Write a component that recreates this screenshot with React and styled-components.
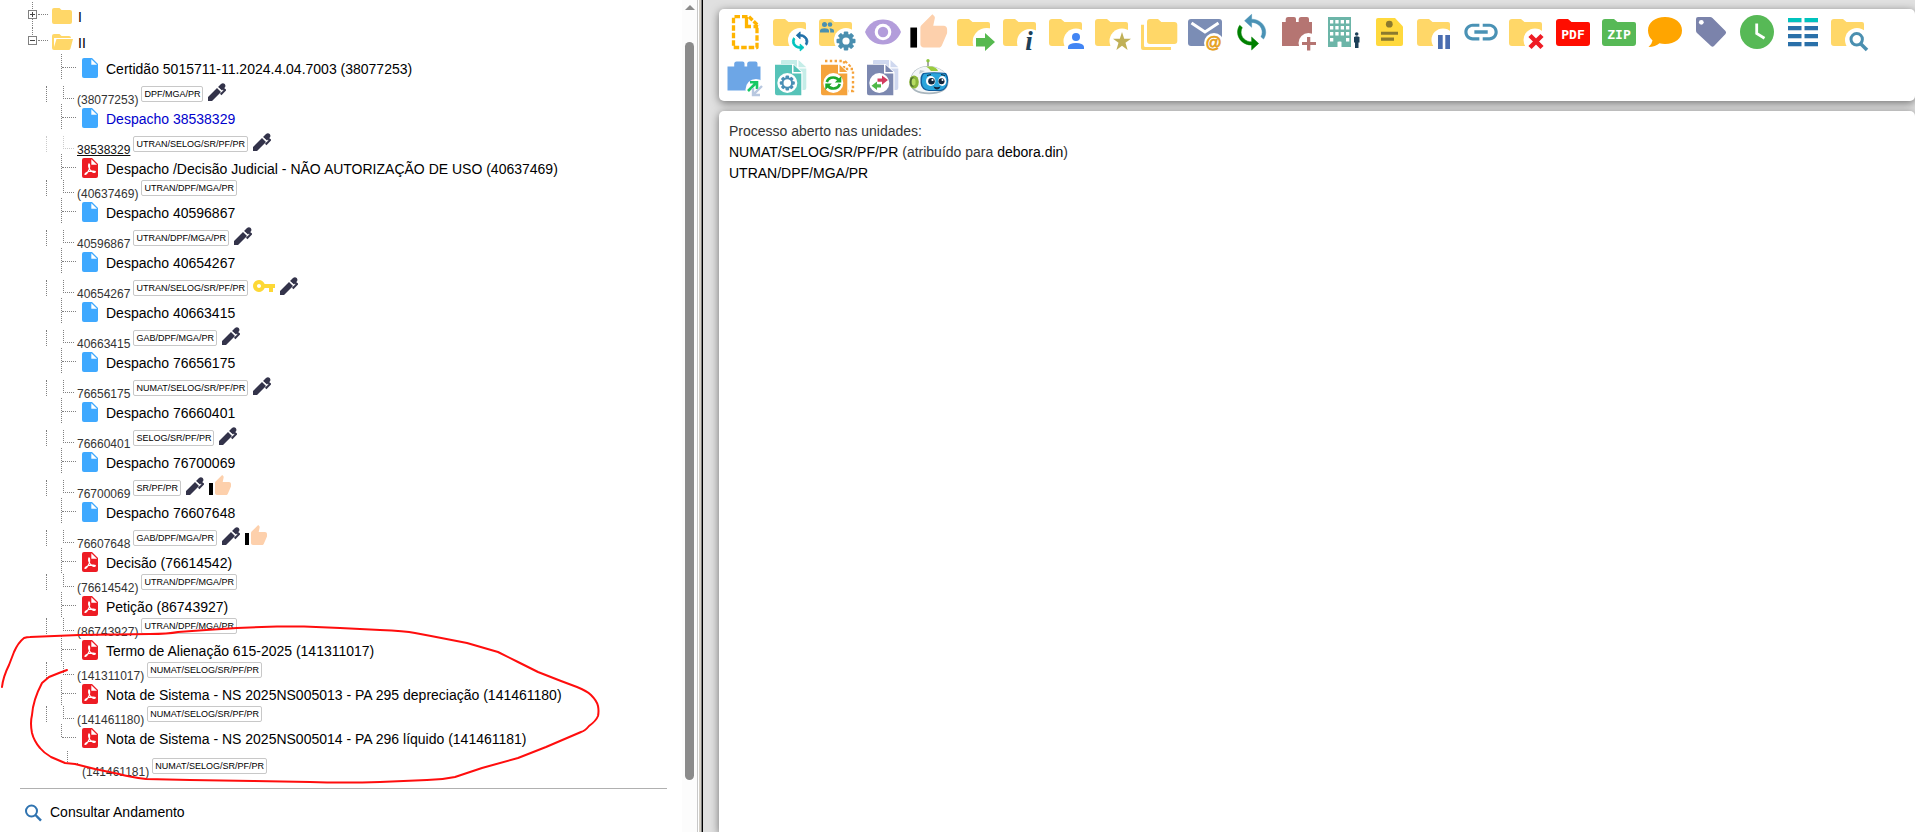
import React from "react";
import styled, { createGlobalStyle, css } from "styled-components";

const GlobalStyle = createGlobalStyle`
  * { box-sizing: border-box; }
  body {
    margin: 0;
    background: #fff;
    color: #333;
    font: 14px/16px "Liberation Sans", Arial, sans-serif;
  }
  ul { list-style: none; margin: 0; padding: 0; }
  a { color: #000; text-decoration: none; }
`;

/* ---------- page frame ---------- */

const Page = styled.div`
  display: grid;
  grid-template-columns: minmax(0, 703fr) minmax(0, 1212fr);
  height: 100vh;
  overflow: hidden;
`;

const TreePane = styled.aside`
  display: flex;
  min-width: 0;
  overflow: hidden;
`;

const TreeContent = styled.div`
  position: relative;
  flex: 1;
  min-width: 0;
  padding-top: 2px;
  white-space: nowrap;
  overflow: hidden;
`;

const ScrollTrack = styled.div`
  display: flex;
  flex-direction: column;
  align-items: center;
  flex: 0 0 15px;
  padding: 5px 0 52px;
  background: #fcfcfc;
`;

const ScrollArrow = styled.span`
  border: 5px solid transparent;
  border-top-width: 0;
  border-bottom-color: #8b8b8b;
`;

const ScrollThumb = styled.span`
  flex: 1;
  width: 9px;
  margin-top: 32px;
  border-radius: 5px;
  background: #8b8b8b;
`;

const Splitter = styled.div`
  flex: 0 0 6px;
  border-left: 1px solid #c8c8c8;
  border-right: 1px solid #000;
  background: linear-gradient(to right, #fff 0 1px, #d4d0c8 1px 3px, #808080 3px);
`;

/* ---------- process tree ---------- */

const dots = "1px dotted #808080";

const FolderRow = styled.div`
  display: flex;
  align-items: flex-start;
  height: 26px;
  padding-left: 28px;
`;

const Toggle = styled.button`
  display: block;
  width: 10px;
  height: 26px;
  padding: 0;
  border: 0;
  background: none;
`;

const FolderBranch = styled.span`
  width: 10px;
  height: 13px;
  border-bottom: ${dots};
`;

const FolderIcon = styled.svg`
  width: 22px;
  height: 16px;
  margin: 6px 4px 0;
`;

const FolderName = styled.span`
  padding-top: 7px;
  color: #000;
`;

const TitleRow = styled.div`
  display: flex;
  align-items: flex-start;
  height: 25px;
  padding-left: 61px;
`;

const Branch = styled.span`
  width: 15px;
  height: ${(p) => (p.$last ? 13 : 25)}px;
  border-left: ${dots};
  &::before {
    content: "";
    display: block;
    height: 13px;
    border-bottom: ${dots};
  }
`;

const DocIcon = styled.svg`
  width: 16px;
  height: 20px;
  margin: 4px 8px 0 6px;
`;

const DocLink = styled.a`
  padding-top: 7px;
  color: ${(p) => (p.$visited ? "#0000cc" : "#000")};
`;

const MetaRow = styled.div`
  display: flex;
  align-items: flex-end;
  height: ${(p) => (p.$tall ? 25 : 19)}px;
  padding: 0 0 2px 46px;
  ${(p) =>
    p.$last &&
    css`
      height: 27px;
      padding-left: 50px;
    `}
`;

const Guide = styled.span`
  width: 17px;
  height: 16px;
  border-left: ${(p) => (p.$hidden ? "0" : dots)};
  opacity: ${(p) => (p.$faint ? 0.4 : 1)};
`;

const Corner = styled.span`
  align-self: flex-end;
  width: 11px;
  height: 13px;
  margin: ${(p) => (p.$last ? "0 4px 10px 0" : "0 3px 3px 0")};
  border-left: ${dots};
  border-bottom: ${dots};
  opacity: ${(p) => (p.$faint ? 0.4 : 1)};
`;

const DocNumber = styled.span`
  margin: 0 3px -5px 0;
  font-size: 12px;
  line-height: 14px;
  color: ${(p) => (p.$selected ? "#111" : "#333")};
  text-decoration: ${(p) => (p.$selected ? "underline" : "none")};
`;

const UnitBadge = styled.a`
  height: 16px;
  padding: 0 2px;
  border: 1px solid #c8c8c8;
  border-radius: 2px;
  background: #fff;
  font-size: 9px;
  line-height: 14px;
`;

const MetaIcon = styled.svg`
  width: ${(p) => p.$w}px;
  height: ${(p) => p.$h}px;
  margin: 0 0 ${(p) => p.$lift || 1}px 5px;
`;

const Footer = styled.footer`
  margin: 12px 15px 0 20px;
  padding: 15px 5px;
  border-top: 1px solid #b0b0b0;
`;

const FooterLink = styled.a`
  display: flex;
  align-items: flex-start;
  gap: 8px;
`;

const Annotation = styled.svg`
  position: absolute;
  top: 0;
  left: 0;
  width: 620px;
  height: 832px;
  pointer-events: none;
`;

/* ---------- right side ---------- */

const MainPane = styled.main`
  display: flex;
  flex-direction: column;
  gap: 10px;
  padding: 9px 0 0 16px;
  background: #e0e0e0;
  overflow: hidden;
`;

const Card = styled.section`
  border-radius: 5px;
  background: #fff;
  box-shadow: 0 2px 9px rgba(0, 0, 0, 0.5);
`;

const Toolbar = styled(Card)`
  display: flex;
  flex-wrap: wrap;
  padding-left: 3px;
`;

const ToolButton = styled.button`
  width: 46px;
  height: 46px;
  padding: 0;
  border: 0;
  background: none;
  cursor: pointer;
  svg { display: block; }
`;

const Details = styled(Card)`
  flex: 1;
  padding: 10px;
  border-radius: 5px 5px 0 0;
  line-height: 21px;
`;

const Line = styled.p`
  margin: 0;
`;

/* ---------- small drawings ---------- */

const FileGlyph = ({ pdf }) => (
  <DocIcon viewBox="0 0 16 20" aria-hidden="true">
    <path fill={pdf ? "#ed1c24" : "#3fa9ff"} d="M2 0H10L16 6V18a2 2 0 0 1-2 2H2a2 2 0 0 1-2-2V2a2 2 0 0 1 2-2Z" />
    <path fill="#fff" d="M9.300 1.200V6.800H15Z" />
    {pdf && (
      <path
        fill="none"
        stroke="#fff"
        strokeWidth="1.200"
        strokeLinejoin="round"
        d="M7 5.800C6.200 7.500 7 10.300 8.300 12.200C9.700 14 12.600 15 13.300 14C13.700 13 10 12.700 7 13.500C4.500 14.200 2.600 15.500 3 16.400C3.800 17 5.800 14.400 6.900 12C7.800 9.800 8 6.200 7 5.800Z"
      />
    )}
  </DocIcon>
);

const ToggleBox = ({ open }) => (
  <svg width="10" height="26" viewBox="0 0 10 26" fill="none" stroke="#808080" shapeRendering="crispEdges" aria-hidden="true">
    <path d={open ? "M4.500 0V8" : "M4.500 0V8M4.500 17V26"} strokeDasharray="1 1" />
    <path d="M.5 8.500H8.500V16.500H.5Z" />
    <path stroke="#444" d={open ? "M2 12.500H7" : "M2 12.500H7M4.500 10V15"} />
  </svg>
);

const THUMB =
  "M23 10c0-1.100-.9-2-2-2h-6.310l.95-4.570.03-.32c0-.41-.17-.79-.44-1.060L14.170 1 7.590 7.590C7.220 7.950 7 8.450 7 9v10c0 1.100.9 2 2 2h9c.83 0 1.540-.5 1.840-1.220l3.020-7.050c.09-.23.14-.47.14-.73v-2z";

const Thumb = () => (
  <>
    <path d="M1 21h4V9H1z" fill="#000" />
    <path d={THUMB} fill="#fdd0ac" />
  </>
);

const META_ICONS = {
  pen: (
    <MetaIcon key="pen" $w={18} $h={18} viewBox="0 0 18 18" aria-label="Assinatura">
      <path fill="#33334a" d="M0 14L9 5L13 9L4 18H0ZM10 4L13 1Q15 -.6 16.700 1Q18 2.600 17 4.200L14 7.500Z" />
      <path fill="none" stroke="#33334a" strokeWidth="2" d="M14.500 5L17 7L12.700 11.500" />
      <path stroke="#fff" strokeWidth="1" d="M9.600 4.300L13.800 8.500" />
    </MetaIcon>
  ),
  key: (
    <MetaIcon key="key" $w={22} $h={12} $lift={4} viewBox="1 6 22 12" aria-label="Restrito">
      <path fill="#fdd835" d="M12.650 10C11.830 7.670 9.610 6 7 6c-3.310 0-6 2.690-6 6s2.690 6 6 6c2.610 0 4.830-1.670 5.650-4H17v4h4v-4h2v-4H12.650zM7 14c-1.100 0-2-.9-2-2s.9-2 2-2 2 .9 2 2-.9 2-2 2z" />
    </MetaIcon>
  ),
  thumb: (
    <MetaIcon key="thumb" $w={22} $h={20} viewBox="1 1 22 20" aria-label="Ciência">
      <Thumb />
    </MetaIcon>
  ),
};

/* ---------- toolbar drawings, each on a 46 x 46 board ---------- */

const Folder = ({ color = "#ffd768" }) => (
  <path fill={color} d="M8 10H17L20.500 13H36a2 2 0 0 1 2 2V34a3 3 0 0 1-3 3H8a3 3 0 0 1-3-3V13a3 3 0 0 1 3-3Z" />
);
const Hole = ({ x = 32, y = 32, r = 12 }) => <circle cx={x} cy={y} r={r} fill="#fff" />;

const Gear = ({ x, y, r, color, hole = 0.38 }) => (
  <g transform={`translate(${x} ${y})`}>
    {[0, 45, 90, 135].map((a) => (
      <rect key={a} x={-r * 0.24} y={-r} width={r * 0.48} height={r * 2} rx="1" fill={color} transform={`rotate(${a})`} />
    ))}
    <circle r={r * 0.76} fill={color} />
    <circle r={r * hole} fill="#fff" />
  </g>
);

const Sync = ({ top, bottom, transform, weight = 0 }) => (
  <g transform={transform} strokeWidth={weight}>
    <path fill={top} stroke={top} d="M12 4V1L8 5l4 4V6c3.310 0 6 2.690 6 6 0 1.010-.25 1.970-.7 2.800l1.460 1.460C19.540 15.030 20 13.570 20 12c0-4.420-3.580-8-8-8z" />
    <path fill={bottom} stroke={bottom} d="M12 18c-3.310 0-6-2.690-6-6 0-1.010.25-1.970.7-2.800L5.240 7.740C4.460 8.970 4 10.430 4 12c0 4.420 3.580 8 8 8v3l4-4-4-4v3z" />
  </g>
);

const Brick = ({ color, x = 0 }) => (
  <path fill={color} d={`M${8 + x} 13H11.700V10Q12 8 14 8H20Q22 8 22 10V13H24.700V10Q25 8 27 8H33Q35 8 35 10V13H38V37H${8 + x}Z`} />
);

const Sheets = ({ front, back, children }) => (
  <>
    {back}
    <path fill="#fff" d="M6 9H25.500L34.500 17V41H6Z" />
    <path fill={front} d="M7 9.700H24V18.500H33.300V40.300H9a2 2 0 0 1-2-2Z" />
    <path fill={front} d="M25.500 9.700L33.300 17H25.500Z" />
    <circle cx="19.300" cy="28" r="10" fill="#fff" />
    {children}
  </>
);
const BackSheet = ({ color }) => (
  <path fill={color} d="M14 5H29V13.500H38.300V33a2 2 0 0 1-2 2H13V6a1 1 0 0 1 1-1ZM30.500 5L38.300 12.200H30.500Z" />
);

const LabelFolder = ({ color, text }) => (
  <>
    <path fill={color} d="M9 10H18L21.500 13H38a2 2 0 0 1 2 2V34a3 3 0 0 1-3 3H9a3 3 0 0 1-3-3V13a3 3 0 0 1 3-3Z" />
    <text x="23" y="30" fill="#fff" textAnchor="middle" fontFamily="'DejaVu Sans Mono', monospace" fontWeight="700" fontSize="13">
      {text}
    </text>
  </>
);

const Robot = () => (
  <>
    <path stroke="#555" strokeWidth="1" d="M22 7V12" />
    <circle cx="22" cy="5.700" r="1.700" fill="#8cc63f" />
    <path fill="#aab6be" d="M22 11C33 11 42 17 42.500 27C42.500 35 34 39.300 23 39.300C11 39.300 4 35 4 27C4 17 12 11 22 11Z" />
    <path fill="#f3f6f8" d="M22 11.500C33 11.500 41.500 17 42 26C41 34 34 37.500 23 37.500C12 37.500 5 34 5 26C5 17 12 11.500 22 11.500Z" />
    <path fill="#9acb3c" d="M20 11.500H26Q31 12.500 32 16H25Q23 13 20 11.500Z" />
    <path fill="#c4cdd3" d="M14 15L19 16L13 19Z" />
    <ellipse cx="8" cy="27" rx="4.800" ry="6.600" fill="#8ab53a" />
    <ellipse cx="6.500" cy="27" rx="2.600" ry="4.800" fill="#4c6b33" />
    <ellipse cx="7.600" cy="27" rx="2" ry="3.800" fill="#b6dc63" />
    <path fill="#125e9c" d="M17 18Q28 16.500 40 18Q43 22 42 27Q41 35 35 36H23Q15 35 14.500 28Q14 20 17 18Z" />
    <path fill="#2aa5dc" d="M18 19Q28 17.500 39 19Q41.500 23 41 27Q40 34 34 35H23Q16.500 34 16 28Q15.500 21 18 19Z" />
    <ellipse cx="24.700" cy="26" rx="4.700" ry="5" fill="#fff" />
    <ellipse cx="36.300" cy="26" rx="4" ry="5" fill="#fff" />
    <circle cx="25.500" cy="26.300" r="3.300" fill="#10263d" />
    <circle cx="35.500" cy="26.300" r="3" fill="#10263d" />
    <circle cx="26.500" cy="25" r="1.100" fill="#fff" />
    <circle cx="36.500" cy="25" r="1" fill="#fff" />
    <path fill="#10263d" d="M27.500 31.500Q31 33 34.500 31.500Q33.500 34.500 31 34.500Q28.500 34.500 27.500 31.500Z" />
    <path stroke="#10263d" strokeWidth="1" d="M21 20.500L25 19.500M35 19.500L39 20.500" />
  </>
);

const TOOLS = [
  ["Incluir Documento", (
    <g fill="none" stroke="#ffb400" strokeWidth="3.300">
      <path strokeDasharray="5.500 2" strokeLinejoin="round" d="M25.500 7.700H11.500V38.500H35V18" />
      <path d="M24.500 8V17.500H29M31.500 17.500H36" />
      <path strokeDasharray="5 1.500" d="M27 7.700L36.500 17" />
    </g>
  )],
  ["Iniciar Processo Relacionado", (
    <><Folder /><Hole y={31} /><Sync top="#1f6fa8" bottom="#00c3bd" weight={0.9} transform="translate(20.500 22) scale(.97 .87)" /></>
  )],
  ["Gerenciar Grupo", (
    <>
      <Folder />
      <g fill="#4a90b0">
        <circle cx="10.500" cy="15.500" r="2.500" /><circle cx="16" cy="15.500" r="2.300" />
        <path d="M6 23.500V21.500Q6.500 19.300 10.500 19.300Q14.500 19.300 15 21.500V23.500ZM16.200 23.500V21.500L15.500 19.300Q19.500 19.500 20 21.500V23.500Z" />
      </g>
      <Hole y={31} /><Gear x={32} y={32} r={9.5} color="#4a8fb0" />
    </>
  )],
  ["Acompanhamento Especial", (
    <>
      <path fill="#b39ddb" d="M5 23C8 15 15 10.500 23 10.500S38 15 41 23C38 31 31 35.500 23 35.500S8 31 5 23Z" />
      <circle cx="23" cy="23" r="8.300" fill="#fff" /><circle cx="23" cy="23" r="5.200" fill="#b39ddb" />
    </>
  )],
  ["Ciência", <g transform="translate(2.700 3.500) scale(1.670)"><Thumb /></g>],
  ["Enviar Processo", (
    <><Folder /><Hole x={34.7} y={33} r={14} /><path fill="#56b94f" d="M24 29H33V24L43 33L33 42V37.500H24Z" /></>
  )],
  ["Atualizar Andamento", (
    <><Folder /><Hole x={32} y={33} r={13} />
      <text x="31" y="41" fill="#1c3f57" textAnchor="middle" fontFamily="'Liberation Serif', serif" fontStyle="italic" fontWeight="700" fontSize="27">i</text></>
  )],
  ["Atribuir Processo", (
    <><Folder /><Hole r={12.5} /><circle cx="32" cy="28" r="4" fill="#4285f4" /><path fill="#4285f4" d="M24 40V37.500Q25 34 32 34Q39 34 40 37.500V40Z" /></>
  )],
  ["Marcador Favorito", (
    <><Folder /><Hole r={12.5} /><path fill="#c0b057" d="M32 23L34.200 29.800H41L35.500 33.800L37.600 41L32 36.700L26.400 41L28.500 33.800L23 29.800H29.800Z" /></>
  )],
  ["Duplicar Processo", (
    <g fill="#ffd768">
      <path d="M5 15.700H8V36.500Q8 38 9.500 38H35V41H7Q5 41 5 39Z" />
      <path d="M14 10H22L25.300 13H38.300a3 3 0 0 1 3 3V32a3 3 0 0 1-3 3H14a3 3 0 0 1-3-3V13a3 3 0 0 1 3-3Z" />
    </g>
  )],
  ["Enviar Correspondência", (
    <>
      <rect x="6" y="10" width="34" height="27" rx="3" fill="#7b8db5" />
      <path fill="none" stroke="#fff" strokeWidth="3" d="M9.500 14L23 23L36.500 14" />
      <Hole y={34} r={10} />
      <text x="31.500" y="39" fill="#e6a020" stroke="#e6a020" strokeWidth=".7" textAnchor="middle" fontFamily="'Liberation Sans', sans-serif" fontWeight="700" fontSize="16">@</text>
    </>
  )],
  ["Atualizar", <Sync top="#4a92b5" bottom="#008000" weight={0.3} transform="translate(2.500 3.700) scale(1.760 1.620)" />],
  ["Incluir Bloco", (
    <><Brick color="#b57572" /><Hole x={34.5} y={34} r={10} /><path fill="#b57572" d="M33 28H36.300V33H42V36H36.300V41.500H33V36H28V33H33Z" /></>
  )],
  ["Unidades", (
    <>
      <path fill="#6cb5a8" d="M8 8H31V38H21.500V32.500H17.500V38H8Z" />
      {[11, 17, 23, 29].flatMap((y) => [10, 15.3, 20.7, 26].map((x) => (
        <rect key={`${x}-${y}`} x={x} y={y} width="3.300" height="3.500" fill={y === 29 && x > 15 && x < 21 ? "#6cb5a8" : "#fff"} />
      )))}
      <g fill="#1c3f57"><circle cx="36.700" cy="25" r="1.800" /><path d="M34 28Q36.700 26.700 39.500 28V33.500H38.500V39H35V33.500H34Z" /></g>
    </>
  )],
  ["Anotações", (
    <>
      <path fill="#ffd93d" d="M12 9H29L37 17.500V35a2 2 0 0 1-2 2H12a2 2 0 0 1-2-2V11a2 2 0 0 1 2-2Z" />
      <g fill="#8b7a2e"><circle cx="23.300" cy="15.200" r="3.400" /><path d="M15 22.700H32V25.700H15ZM15 28.500H28V31.700H15Z" /></g>
    </>
  )],
  ["Sobrestar Processo", <><Folder /><Hole x={31} y={31} r={11.5} /><path fill="#4a6db0" d="M26 26H30.700V40H26ZM33.300 26H38V40H33.300Z" /></>],
  ["Copiar Link", (
    <path transform="translate(3 3) scale(1.670)" fill="#4a92b5" d="M3.900 12c0-1.710 1.390-3.100 3.100-3.100h4V7H7c-2.760 0-5 2.240-5 5s2.240 5 5 5h4v-1.900H7c-1.710 0-3.100-1.390-3.100-3.100zM8 13h8v-2H8v2zm9-6h-4v1.900h4c1.710 0 3.100 1.390 3.100 3.100s-1.390 3.100-3.100 3.100h-4V17h4c2.760 0 5-2.240 5-5s-2.240-5-5-5z" />
  )],
  ["Concluir Processo", <><Folder /><Hole x={31} y={31} r={11.5} /><path stroke="#ee1c25" strokeWidth="4.500" d="M26 26.500L38 38.500M38 26.500L26 38.500" /></>],
  ["Gerar PDF", <LabelFolder color="#ff0d00" text="PDF" />],
  ["Gerar ZIP", <LabelFolder color="#57b956" text="ZIP" />],
  ["Comentários", <path fill="#ffa500" d="M23 8C33 8 40 13.500 40 21.500S33 35 23 35Q20 35 17.500 34.300Q13.500 37.800 6.500 38Q10 35 10.500 31.500Q6 27.500 6 21.500C6 13.500 13 8 23 8Z" />],
  ["Marcadores", <><path fill="#7b83ab" d="M10 8H22Q23.500 8 24.500 9L37.500 22Q38.700 23.500 37.500 25L26 37Q24.500 38.500 23 37L9 24Q8 23 8 21.500V10Q8 8 10 8Z" /><circle cx="13.300" cy="13.300" r="2.400" fill="#fff" /></>],
  ["Controle de Prazo", <><circle cx="23" cy="23" r="17" fill="#57b956" /><path fill="none" stroke="#fff" strokeWidth="2.800" d="M22.700 14.500V24.500L30.500 29.200" /></>],
  ["Ordenar Documentos", (
    <>
      {[9, 17, 25, 33].flatMap((y, i) => [8, 24.5].map((x) => (
        <g key={`${x}-${y}`}><rect x={x} y={y} width="13.500" height="4" fill={i ? "#2a70a9" : "#00c3bd"} /><rect x={x} y={y + 4} width="13.500" height="1" fill="#c5d6e6" /></g>
      )))}
    </>
  )],
  ["Pesquisar no Processo", <><Folder /><Hole x={31} y={31} r={12} /><circle cx="30.700" cy="30.300" r="5.700" fill="none" stroke="#4a8fb0" strokeWidth="3" /><path stroke="#4a8fb0" strokeWidth="3.500" d="M34.700 34.700L41 41" /></>],
  ["Bloco de Assinatura", (
    <>
      <g transform="translate(.5 -1.500)"><Brick color="#6da6e6" x={-3} /></g>
      <circle cx="34" cy="34.500" r="10.500" fill="#fff" />
      <path fill="none" stroke="#17c964" strokeWidth="2.600" d="M26 36L34.500 27.500M28 27.200H35V34" />
      <path fill="none" stroke="#b8c8e0" strokeWidth="2.400" d="M40 31L31.800 39.200M31 33V40H38" />
    </>
  )],
  ["Automatizar Documento", (
    <Sheets front="#56c3b8" back={<BackSheet color="#c5ede8" />}><Gear x={19.3} y={28} r={7.5} color="#4a8fb5" hole={0.5} /></Sheets>
  )],
  ["Converter Documento", (
    <Sheets front="#f5a33c" back={<g fill="none" stroke="#f5a33c" strokeWidth="2.400"><path strokeDasharray="2.400 2.400" d="M11 6H30V14H39V36H34" /><path strokeWidth="2" strokeDasharray="3 2" d="M31 6L38 13" /></g>}>
      <g transform="translate(19.300 28)" fill="none" stroke="#1fa82c" strokeWidth="2.700">
        <path d="M-6.500 -1Q-5 -5.500 0 -5.500Q4 -5.500 6 -2M6.500 1Q5 5.500 0 5.500Q-4 5.500 -6 2" />
        <path fill="#1fa82c" stroke="none" d="M8 -7V-.5H1.500ZM-8 7V.5H-1.500Z" />
      </g>
    </Sheets>
  )],
  ["Comparar Documentos", (
    <Sheets front="#7c88b0" back={<BackSheet color="#cfd8ef" />}>
      <path fill="#d23b5e" d="M17.500 23.500H22V20.500L28 25L22 29.700V26.700H17.500Z" />
      <path fill="#4fb848" d="M21 29.200H17V26.500L11.500 30.800L17 35V32.500H21Z" />
    </Sheets>
  )],
  ["Assistente Virtual", <Robot />],
];

/* ---------- data ---------- */

const DOCS = [
  { title: "Certidão 5015711-11.2024.4.04.7003 (38077253)", number: "(38077253)", unit: "DPF/MGA/PR", icons: ["pen"] },
  { title: "Despacho 38538329", number: "38538329", unit: "UTRAN/SELOG/SR/PF/PR", icons: ["pen"], selected: true },
  { title: "Despacho /Decisão Judicial - NÃO AUTORIZAÇÃO DE USO (40637469)", number: "(40637469)", unit: "UTRAN/DPF/MGA/PR", pdf: true },
  { title: "Despacho 40596867", number: "40596867", unit: "UTRAN/DPF/MGA/PR", icons: ["pen"] },
  { title: "Despacho 40654267", number: "40654267", unit: "UTRAN/SELOG/SR/PF/PR", icons: ["key", "pen"] },
  { title: "Despacho 40663415", number: "40663415", unit: "GAB/DPF/MGA/PR", icons: ["pen"] },
  { title: "Despacho 76656175", number: "76656175", unit: "NUMAT/SELOG/SR/PF/PR", icons: ["pen"] },
  { title: "Despacho 76660401", number: "76660401", unit: "SELOG/SR/PF/PR", icons: ["pen"] },
  { title: "Despacho 76700069", number: "76700069", unit: "SR/PF/PR", icons: ["pen", "thumb"] },
  { title: "Despacho 76607648", number: "76607648", unit: "GAB/DPF/MGA/PR", icons: ["pen", "thumb"] },
  { title: "Decisão (76614542)", number: "(76614542)", unit: "UTRAN/DPF/MGA/PR", pdf: true },
  { title: "Petição (86743927)", number: "(86743927)", unit: "UTRAN/DPF/MGA/PR", pdf: true },
  { title: "Termo de Alienação 615-2025 (141311017)", number: "(141311017)", unit: "NUMAT/SELOG/SR/PF/PR", pdf: true },
  { title: "Nota de Sistema - NS 2025NS005013 - PA 295 depreciação (141461180)", number: "(141461180)", unit: "NUMAT/SELOG/SR/PF/PR", pdf: true },
  { title: "Nota de Sistema - NS 2025NS005014 - PA 296 líquido (141461181)", number: "(141461181)", unit: "NUMAT/SELOG/SR/PF/PR", pdf: true },
];

const DocumentItem = ({ doc, last }) => (
  <li>
    <TitleRow>
      <Branch $last={last} />
      <FileGlyph pdf={doc.pdf} />
      <DocLink href="#" $visited={doc.selected}>{doc.title}</DocLink>
    </TitleRow>
    <MetaRow $tall={Boolean(doc.icons)} $last={last}>
      <Guide $hidden={last} $faint={doc.selected} />
      <Corner $last={last} $faint={doc.selected} />
      <DocNumber $selected={doc.selected}>{doc.number}</DocNumber>
      <UnitBadge href="#">{doc.unit}</UnitBadge>
      {(doc.icons || []).map((name) => META_ICONS[name])}
    </MetaRow>
  </li>
);

export default function App() {
  return (
    <Page>
      <GlobalStyle />
      <TreePane>
        <TreeContent>
          <FolderRow>
            <Toggle aria-label="Abrir pasta I"><ToggleBox /></Toggle>
            <FolderBranch />
            <FolderIcon viewBox="0 0 22 16" aria-hidden="true">
              <path fill="#ffd768" d="M2 0H7.500L9.500 2H18a2 2 0 0 1 2 2V14a2 2 0 0 1-2 2H2a2 2 0 0 1-2-2V2a2 2 0 0 1 2-2Z" />
            </FolderIcon>
            <FolderName>I</FolderName>
          </FolderRow>
          <FolderRow>
            <Toggle aria-label="Fechar pasta II"><ToggleBox open /></Toggle>
            <FolderBranch />
            <FolderIcon viewBox="0 0 22 16" aria-hidden="true">
              <path fill="#ffd768" d="M2 0H7.500L9.500 2H17a2 2 0 0 1 2 2H2V13L4.500 5H21L18.500 14.500Q18 16 16.500 16H2a2 2 0 0 1-2-2V2a2 2 0 0 1 2-2Z" />
            </FolderIcon>
            <FolderName>II</FolderName>
          </FolderRow>
          <ul>
            {DOCS.map((doc, i) => (
              <DocumentItem key={doc.number} doc={doc} last={i === DOCS.length - 1} />
            ))}
          </ul>
          <Footer>
            <FooterLink href="#">
              <svg width="17" height="18" viewBox="0 0 17 18" fill="none" stroke="#2f73b0" aria-hidden="true">
                <circle cx="6.500" cy="7" r="5.500" strokeWidth="2" />
                <path strokeWidth="2.500" d="M10.500 11L16 16.700" />
              </svg>
              Consultar Andamento
            </FooterLink>
          </Footer>
          <Annotation viewBox="0 0 620 832" aria-hidden="true">
            <path
              fill="none"
              stroke="#ff0d0d"
              strokeWidth="2"
              strokeLinejoin="round"
              strokeLinecap="round"
              d="M2 687C3 678 6 671 9 665L14 652C17 645 19 642 24 638Q27 637 30 637L79 635L150 634Q168 634 178 632L206 630L237 628L277 626.500H304L340 628L380 630Q405 631 415 633L431 636L467 643L498 652L518 662L538 672L561 681L577 687Q587 691 591 695Q597 701 598 706Q599 711 598 716Q596 721 589 726Q585 731 581 732L546 747L518 758L482 768L455 777Q441 780 427 780L380 782Q344 783 310 782L253 781L190 780L146 779Q130 777 119 774L95 769L75 764L65 763L51 757Q44 753 40 748Q34 741 32 733Q30 723 32 715Q33 700 42 683L49 677L59 673L67 670"
            />
          </Annotation>
        </TreeContent>
        <ScrollTrack aria-hidden="true">
          <ScrollArrow />
          <ScrollThumb />
        </ScrollTrack>
        <Splitter />
      </TreePane>
      <MainPane>
        <Toolbar aria-label="Ações do processo">
          {TOOLS.map(([name, drawing]) => (
            <ToolButton key={name} type="button" aria-label={name}>
              <svg width="46" height="46" viewBox="0 0 46 46" aria-hidden="true">{drawing}</svg>
            </ToolButton>
          ))}
        </Toolbar>
        <Details>
          <Line>Processo aberto nas unidades:</Line>
          <Line><a href="#">NUMAT/SELOG/SR/PF/PR</a> (atribuído para <a href="#">debora.din</a>)</Line>
          <Line><a href="#">UTRAN/DPF/MGA/PR</a></Line>
        </Details>
      </MainPane>
    </Page>
  );
}
